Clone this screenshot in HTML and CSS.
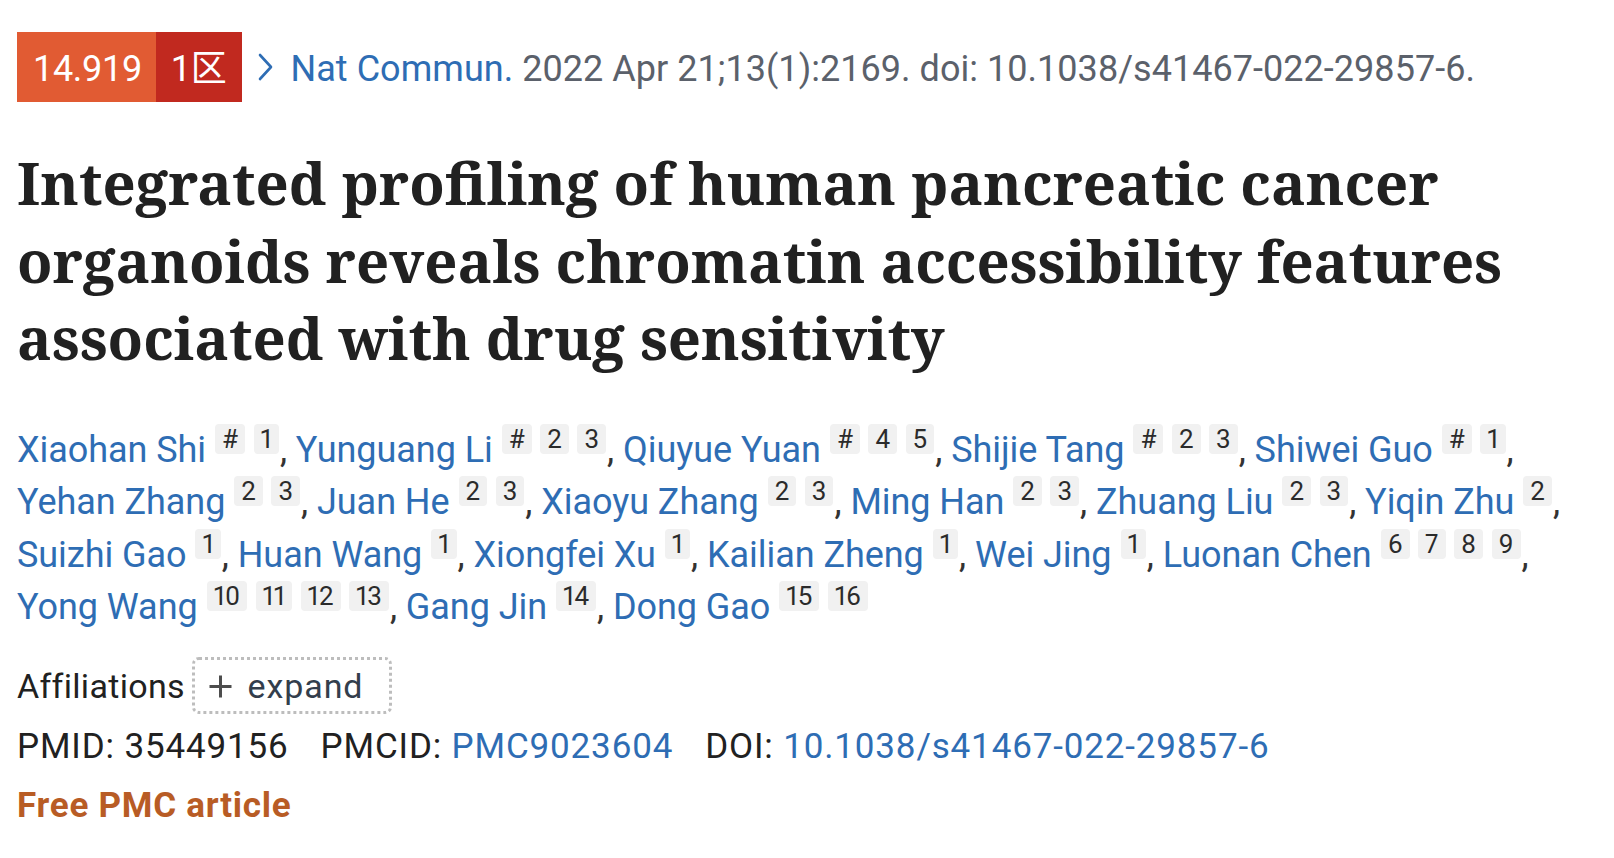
FILE: index.html
```html
<!DOCTYPE html>
<html lang="en">
<head>
<meta charset="utf-8">
<title>Integrated profiling of human pancreatic cancer organoids</title>
<link rel="stylesheet" href="styles.css">
</head>
<body>
<main class="article">
  <div class="cite">
    <div class="badge"><span class="if">14.919</span><span class="zone">1区</span></div>
    <svg class="chev" width="16" height="28" viewBox="0 0 16 28"><path d="M3 2 L14 14 L3 26" fill="none" stroke="#2e6db4" stroke-width="2.6" stroke-linecap="round" stroke-linejoin="round"/></svg>
    <div class="cite-text"><a class="journal" href="#">Nat Commun.</a> 2022 Apr 21;13(1):2169. doi: 10.1038/s41467-022-29857-6.</div>
  </div>

  <h1 class="title">Integrated profiling of human pancreatic cancer organoids reveals chromatin accessibility features associated with drug sensitivity</h1>

  <div class="authors">
    <span class="author"><a href="#">Xiaohan Shi</a><span class="sup">#</span><span class="sup">1</span>,</span>
    <span class="author"><a href="#">Yunguang Li</a><span class="sup">#</span><span class="sup">2</span><span class="sup">3</span>,</span>
    <span class="author"><a href="#">Qiuyue Yuan</a><span class="sup">#</span><span class="sup">4</span><span class="sup">5</span>,</span>
    <span class="author"><a href="#">Shijie Tang</a><span class="sup">#</span><span class="sup">2</span><span class="sup">3</span>,</span>
    <span class="author"><a href="#">Shiwei Guo</a><span class="sup">#</span><span class="sup">1</span>,</span>
    <span class="author"><a href="#">Yehan Zhang</a><span class="sup">2</span><span class="sup">3</span>,</span>
    <span class="author"><a href="#">Juan He</a><span class="sup">2</span><span class="sup">3</span>,</span>
    <span class="author"><a href="#">Xiaoyu Zhang</a><span class="sup">2</span><span class="sup">3</span>,</span>
    <span class="author"><a href="#">Ming Han</a><span class="sup">2</span><span class="sup">3</span>,</span>
    <span class="author"><a href="#">Zhuang Liu</a><span class="sup">2</span><span class="sup">3</span>,</span>
    <span class="author"><a href="#">Yiqin Zhu</a><span class="sup">2</span>,</span>
    <span class="author"><a href="#">Suizhi Gao</a><span class="sup">1</span>,</span>
    <span class="author"><a href="#">Huan Wang</a><span class="sup">1</span>,</span>
    <span class="author"><a href="#">Xiongfei Xu</a><span class="sup">1</span>,</span>
    <span class="author"><a href="#">Kailian Zheng</a><span class="sup">1</span>,</span>
    <span class="author"><a href="#">Wei Jing</a><span class="sup">1</span>,</span>
    <span class="author"><a href="#">Luonan Chen</a><span class="sup">6</span><span class="sup">7</span><span class="sup">8</span><span class="sup">9</span>,</span>
    <span class="author"><a href="#">Yong Wang</a><span class="sup">10</span><span class="sup">11</span><span class="sup">12</span><span class="sup">13</span>,</span>
    <span class="author"><a href="#">Gang Jin</a><span class="sup">14</span>,</span>
    <span class="author"><a href="#">Dong Gao</a><span class="sup">15</span><span class="sup">16</span></span>
  </div>

  <div class="affil">Affiliations <span class="expand"><svg class="plus" width="25" height="25" viewBox="0 0 25 25"><path d="M12.5 1.5 V23.5 M1.5 12.5 H23.5" stroke="#4d4d4d" stroke-width="3" fill="none"/></svg><span class="expand-label">expand</span></span></div>

  <div class="ids">
    <span class="id">PMID: <span>35449156</span></span>
    <span class="id">PMCID: <a href="#">PMC9023604</a></span>
    <span class="id">DOI: <a href="#">10.1038/s41467-022-29857-6</a></span>
  </div>

  <div class="free">Free PMC article</div>
</main>
</body>
</html>
```
FILE: styles.css
```css
html, body {
  margin: 0;
  padding: 0;
  background: #ffffff;
}

body {
  font-family: Roboto, "Noto Sans CJK SC", sans-serif;
  color: #212121;
}

a {
  color: #2e6db4;
  text-decoration: none;
}

.article {
  padding: 32px 17px 0 17px;
}

/* citation row */
.cite {
  display: flex;
  align-items: baseline;
  font-size: 36px;
  letter-spacing: 0.04px;
}

.badge {
  display: flex;
  height: 70px;
  color: #ffffff;
  letter-spacing: -0.3px;
}

.if,
.zone {
  display: block;
  line-height: 66px;
  padding-top: 4px;
}

.if {
  background: #e15b33;
  padding-left: 16px;
  padding-right: 14px;
}

.zone {
  background: #c1291f;
  padding-left: 15px;
  padding-right: 15px;
}

.chev {
  align-self: center;
  margin-left: 15px;
  margin-right: 18px;
}

.cite-text {
  color: #5b616b;
  white-space: nowrap;
}

/* title */
.title {
  margin: 42px 0 0 0;
  font-family: "Noto Serif", "DejaVu Serif", serif;
  font-weight: 700;
  font-size: 58px;
  line-height: 77.5px;
  color: #212121;
}

/* authors */
.authors {
  margin-top: 47px;
  font-size: 36px;
  letter-spacing: -0.05px;
  line-height: 52.5px;
  color: #333333;
}

.author {
  white-space: nowrap;
}

.sup {
  display: inline-block;
  font-size: 26px;
  font-variant-numeric: proportional-nums;
  line-height: 30px;
  letter-spacing: 0;
  padding: 0 7px;
  margin-left: 7.5px;
  margin-right: 1px;
  vertical-align: 14px;
  background: #f1f1f1;
  border-radius: 4px;
  color: #2b2b2b;
}

.author a + .sup {
  margin-left: 9px;
}

/* affiliations */
.affil {
  margin-top: 23px;
  font-size: 34px;
  letter-spacing: 0.3px;
  color: #212121;
}

.expand {
  display: inline-block;
  padding: 6px 26px 5px 13px;
  border: 3px dotted #bdbdbd;
  border-radius: 7px;
  color: #333e4c;
  margin-left: -2px;
  letter-spacing: 0.9px;
}

.plus {
  vertical-align: middle;
  margin-right: 15px;
  position: relative;
  top: -2px;
}

/* identifiers */
.ids {
  margin-top: 12px;
  font-size: 35px;
  letter-spacing: 0.85px;
  display: flex;
  gap: 32px;
}

.id {
  white-space: nowrap;
}

.free {
  margin-top: 18px;
  font-size: 35px;
  font-weight: 700;
  letter-spacing: 0.75px;
  color: #b85c25;
}
```
